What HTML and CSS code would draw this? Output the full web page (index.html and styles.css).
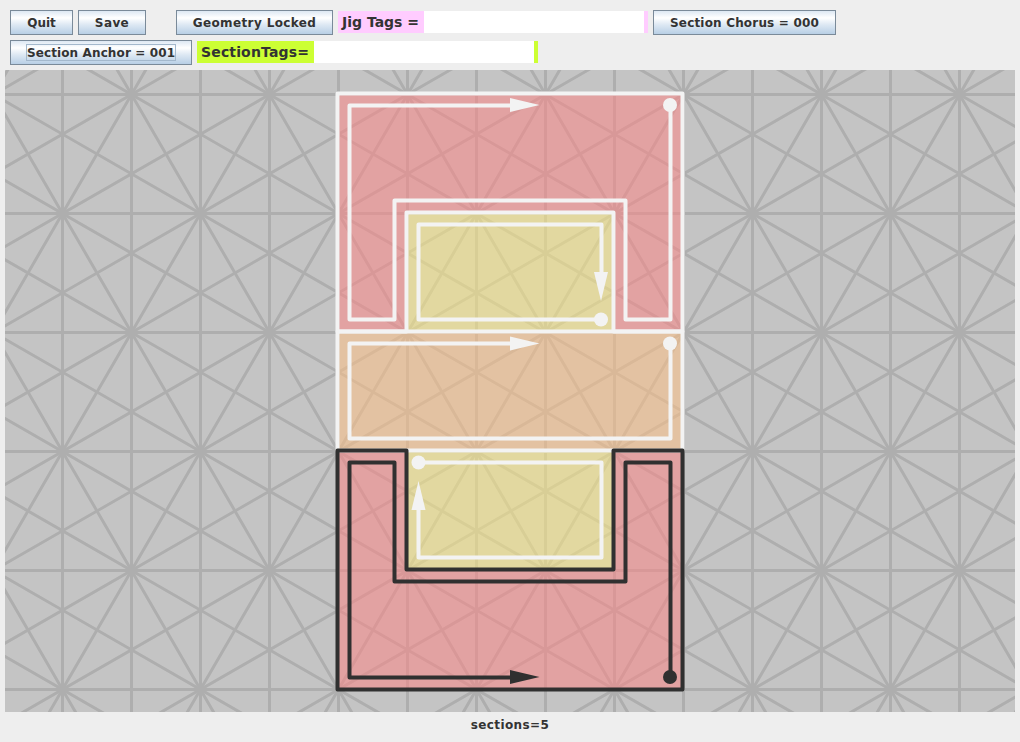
FILE: index.html
```
<!DOCTYPE html>
<html lang="en">
<head>
<meta charset="utf-8">
<title>Jig Editor</title>
<link rel="stylesheet" href="styles.css">
</head>
<body>
<div class="toolbar">
  <div class="row">
    <button class="btn quit">Quit</button>
    <button class="btn save">Save</button>
    <button class="btn geometry">Geometry Locked</button>
    <div class="tag jig"><span class="tag-label">Jig Tags =</span><span class="tag-field"></span></div>
    <button class="btn chorus">Section Chorus = 000</button>
  </div>
  <div class="row">
    <button class="btn anchor"><span class="focus">Section Anchor = 001</span></button>
    <div class="tag section"><span class="tag-label">SectionTags=</span><span class="tag-field"></span></div>
  </div>
</div>
<svg class="canvas" viewBox="5 70 1010 642" width="1010" height="642">
  <defs>
    <pattern id="grid" x="62" y="94" width="138" height="238" patternUnits="userSpaceOnUse">
      <g class="grid-line">
        <path d="M.5 -5V245M69.5 -5V245M138.5 -5V245M-5 .5H145M-5 119.5H145M-5 238.5H145"/>
        <path d="M-275.5 -118.5l276 476M-137.5 -118.5l276 476M.5 -118.5l276 476M138.5 357.5l276 -476M.5 357.5l276 -476M-137.5 357.5l276 -476"/>
        <path d="M-137.5 -118.5l414 238M-137.5 -39.17l414 238M-137.5 40.17l414 238M-137.5 119.5l414 238M-137.5 198.83l414 238M-137.5 -197.83l414 238"/>
        <path d="M276.5 -118.5l-414 238M276.5 -39.17l-414 238M276.5 40.17l-414 238M276.5 119.5l-414 238M276.5 198.83l-414 238M276.5 -197.83l-414 238"/>
      </g>
    </pattern>
  </defs>
  <rect class="ground" x="5" y="70" width="1010" height="642"/>
  <rect x="5" y="70" width="1010" height="642" fill="url(#grid)"/>

  <path class="red" d="M337.5 93.5H682.5V331.5H613.5V212.5H406.5V331.5H337.5Z"/>
  <path class="yellow" d="M406.5 212.5H613.5V331.5H406.5Z"/>
  <path class="orange" d="M337.5 331.5H682.5V450.5H337.5Z"/>
  <path class="yellow" d="M406.5 450.5H613.5V569.5H406.5Z"/>
  <path class="red" d="M337.5 450.5H406.5V569.5H613.5V450.5H682.5V689.5H337.5Z"/>

  <g class="light">
    <path d="M337.5 93.5H682.5V331.5H613.5V212.5H406.5V331.5H337.5Z"/>
    <path d="M337.5 331.5H682.5V450.5H337.5Z"/>
    <path d="M670.5 105V319.5H625.5V200.5H394.5V319.5H349.5V105.5H512"/>
    <path d="M601 319.5H418.5V224.5H601.5V274"/>
    <path d="M670.5 343V438.5H349.5V343.5H512"/>
    <path d="M418.5 462.5H601.5V557.5H418.5V508"/>
    <path class="tip" d="M510 98V112L539.5 105Z"/>
    <path class="tip" d="M594 272H608L601 301Z"/>
    <path class="tip" d="M510 336.5V350.5L539.5 343.5Z"/>
    <path class="tip" d="M411.5 510H425.5L418.5 481Z"/>
    <circle class="tip" cx="670" cy="105" r="7"/>
    <circle class="tip" cx="601" cy="319.5" r="7"/>
    <circle class="tip" cx="670" cy="343.5" r="7"/>
    <circle class="tip" cx="418.5" cy="462.5" r="7"/>
  </g>
  <g class="dark">
    <path d="M337.5 450.5H406.5V569.5H613.5V450.5H682.5V689.5H337.5Z"/>
    <path d="M670.5 677V462.5H625.5V581.5H394.5V462.5H349.5V677.5H512"/>
    <path class="tip" d="M510 670V684L539.5 677Z"/>
    <circle class="tip" cx="670" cy="677" r="7"/>
  </g>
</svg>
<div class="status">sections=5</div>
</body>
</html>
```
FILE: styles.css
```
body {
  margin: 0;
  width: 1020px;
  height: 742px;
  background: #eeeeee;
  color: #333333;
  font: bold 12px "DejaVu Sans", sans-serif;
  display: flex;
  flex-direction: column;
  overflow: hidden;
}
.toolbar {
  height: 70px;
  box-sizing: border-box;
  padding: 10px 10px 0;
  display: flex;
  flex-direction: column;
  gap: 5px;
}
.row {
  display: flex;
  align-items: flex-start;
  gap: 5px;
  height: 25px;
}
.btn {
  height: 25px;
  box-sizing: border-box;
  padding: 0;
  border: 1px solid #7a8a99;
  border-radius: 0;
  background: linear-gradient(#dde8f3 0%, #ffffff 30%, #dde8f3 60%, #b8cfe5 100%);
  color: #333333;
  font: inherit;
  white-space: nowrap;
}
.quit { width: 63px; }
.save { width: 68px; letter-spacing: 0.4px; }
.geometry { width: 157px; margin-left: 25px; letter-spacing: 0.38px; }
.chorus { width: 183px; letter-spacing: 0.18px; }
.anchor { width: 182px; letter-spacing: 0.12px; }
.focus {
  display: inline-block;
  height: 15px;
  line-height: 16px;
  vertical-align: middle;
  outline: 1px solid #a3b8cc;
}
.tag {
  height: 22px;
  margin-top: 1px;
  box-sizing: border-box;
  display: flex;
  font-size: 14px;
  line-height: 22px;
  padding: 0 4px;
}
.tag-label { white-space: nowrap; }
.tag-field { background: #ffffff; }
.jig { background: #ffccff; width: 310px; }
.jig .tag-label { width: 82px; }
.jig .tag-field { width: 220px; }
.section { background: #ccff33; width: 341px; }
.section .tag-label { width: 113px; letter-spacing: 0.15px; }
.section .tag-field { width: 220px; }
.canvas {
  display: block;
  flex: none;
  margin-left: 5px;
}
.ground { fill: #c4c4c4; }
.grid-line { fill: none; stroke: #aeaeae; stroke-width: 3; }
.red { fill: rgba(251, 134, 134, 0.545); }
.yellow { fill: rgba(251, 233, 130, 0.545); }
.orange { fill: rgba(254, 192, 134, 0.545); }
.light { fill: none; stroke: #f3f3f3; stroke-width: 4; stroke-linejoin: round; }
.dark { fill: none; stroke: #303030; stroke-width: 4; stroke-linejoin: round; }
.tip { stroke: none; }
.light .tip { fill: #f3f3f3; }
.dark .tip { fill: #303030; }
.status {
  text-align: center;
  line-height: 26px;
  letter-spacing: 0.4px;
}
```
